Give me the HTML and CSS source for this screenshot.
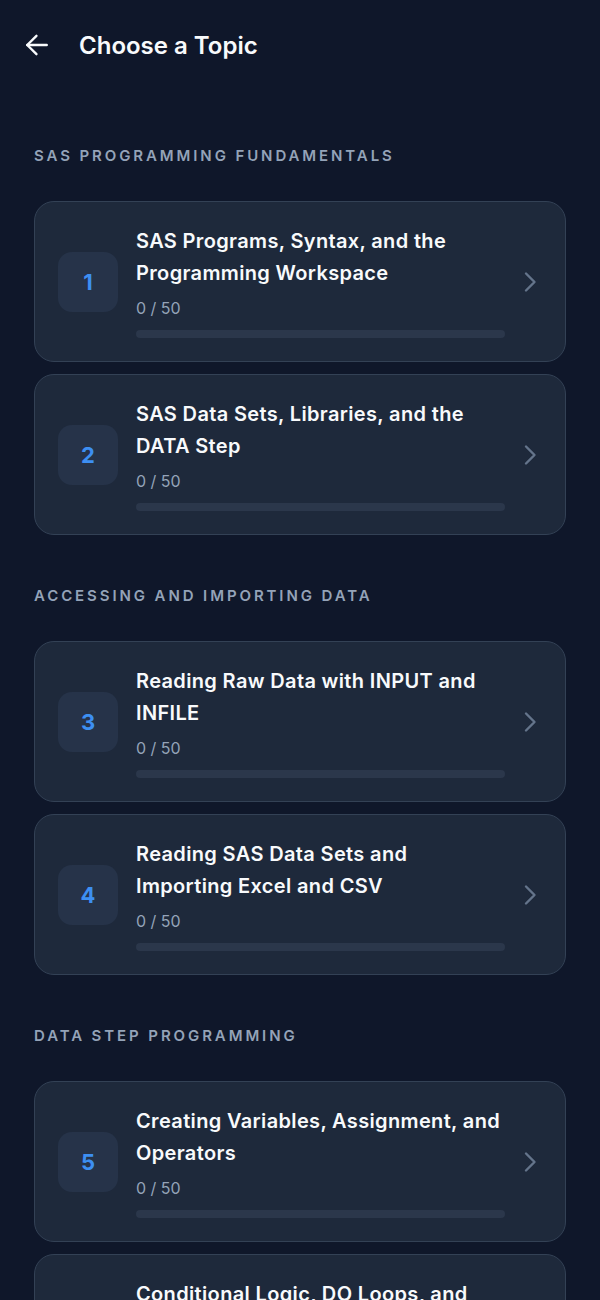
FILE: index.html
```html
<!DOCTYPE html>
<html lang="en">
<head>
  <meta charset="UTF-8">
  <meta name="viewport" content="width=device-width, initial-scale=1.0">
  <title>Choose a Topic</title>
  <link rel="stylesheet" href="styles.css">
</head>
<body>
  <header class="top-bar">
    <button class="back-btn" aria-label="Back">
      <svg width="26" height="26" viewBox="0 0 24 24" fill="none" stroke="currentColor" stroke-width="2.2" stroke-linecap="round" stroke-linejoin="round">
        <path d="M21 12H3"/>
        <path d="M11.5 3.5L3 12l8.5 8.5"/>
      </svg>
    </button>
    <h1>Choose a Topic</h1>
  </header>

  <main class="topic-list">
    <section class="topic-section">
      <h2 class="section-title">SAS Programming Fundamentals</h2>

      <a class="topic-card" href="#">
        <div class="topic-num">1</div>
        <div class="topic-body">
          <div class="topic-name">SAS Programs, Syntax, and the Programming Workspace</div>
          <div class="topic-count">0 / 50</div>
          <div class="progress"><div class="progress-fill" style="width: 0%"></div></div>
        </div>
        <svg class="chevron" width="14" height="22" viewBox="0 0 14 22" fill="none" stroke="currentColor" stroke-width="2.4" stroke-linecap="round" stroke-linejoin="round"><path d="M3 2.5l8.5 8.5L3 19.5"/></svg>
      </a>

      <a class="topic-card" href="#">
        <div class="topic-num">2</div>
        <div class="topic-body">
          <div class="topic-name">SAS Data Sets, Libraries, and the DATA Step</div>
          <div class="topic-count">0 / 50</div>
          <div class="progress"><div class="progress-fill" style="width: 0%"></div></div>
        </div>
        <svg class="chevron" width="14" height="22" viewBox="0 0 14 22" fill="none" stroke="currentColor" stroke-width="2.4" stroke-linecap="round" stroke-linejoin="round"><path d="M3 2.5l8.5 8.5L3 19.5"/></svg>
      </a>
    </section>

    <section class="topic-section">
      <h2 class="section-title">Accessing and Importing Data</h2>

      <a class="topic-card" href="#">
        <div class="topic-num">3</div>
        <div class="topic-body">
          <div class="topic-name">Reading Raw Data with INPUT and INFILE</div>
          <div class="topic-count">0 / 50</div>
          <div class="progress"><div class="progress-fill" style="width: 0%"></div></div>
        </div>
        <svg class="chevron" width="14" height="22" viewBox="0 0 14 22" fill="none" stroke="currentColor" stroke-width="2.4" stroke-linecap="round" stroke-linejoin="round"><path d="M3 2.5l8.5 8.5L3 19.5"/></svg>
      </a>

      <a class="topic-card" href="#">
        <div class="topic-num">4</div>
        <div class="topic-body">
          <div class="topic-name">Reading SAS Data Sets and Importing Excel and CSV</div>
          <div class="topic-count">0 / 50</div>
          <div class="progress"><div class="progress-fill" style="width: 0%"></div></div>
        </div>
        <svg class="chevron" width="14" height="22" viewBox="0 0 14 22" fill="none" stroke="currentColor" stroke-width="2.4" stroke-linecap="round" stroke-linejoin="round"><path d="M3 2.5l8.5 8.5L3 19.5"/></svg>
      </a>
    </section>

    <section class="topic-section">
      <h2 class="section-title">DATA Step Programming</h2>

      <a class="topic-card" href="#">
        <div class="topic-num">5</div>
        <div class="topic-body">
          <div class="topic-name">Creating Variables, Assignment, and Operators</div>
          <div class="topic-count">0 / 50</div>
          <div class="progress"><div class="progress-fill" style="width: 0%"></div></div>
        </div>
        <svg class="chevron" width="14" height="22" viewBox="0 0 14 22" fill="none" stroke="currentColor" stroke-width="2.4" stroke-linecap="round" stroke-linejoin="round"><path d="M3 2.5l8.5 8.5L3 19.5"/></svg>
      </a>

      <a class="topic-card" href="#">
        <div class="topic-num">6</div>
        <div class="topic-body">
          <div class="topic-name">Conditional Logic, DO Loops, and Arrays</div>
          <div class="topic-count">0 / 50</div>
          <div class="progress"><div class="progress-fill" style="width: 0%"></div></div>
        </div>
        <svg class="chevron" width="14" height="22" viewBox="0 0 14 22" fill="none" stroke="currentColor" stroke-width="2.4" stroke-linecap="round" stroke-linejoin="round"><path d="M3 2.5l8.5 8.5L3 19.5"/></svg>
      </a>
    </section>
  </main>
</body>
</html>
```

FILE: styles.css
```css
body {
  font-family: Inter, "Noto Sans", sans-serif;
  margin: 0;
  padding: 0;
  background-color: #0f172a;
  color: #f8fafc;
}
.top-bar {
  display: flex;
  align-items: center;
  height: 90px;
  padding: 0 24px;
  gap: 29px;
}
.back-btn {
  display: flex;
  align-items: center;
  justify-content: center;
  width: 26px;
  height: 26px;
  padding: 0;
  border: none;
  background: none;
  color: #f8fafc;
  cursor: pointer;
}
h1 {
  margin: 0;
  font-size: 24px;
  font-weight: 600;
  letter-spacing: 0;
}
.topic-list {
  padding: 56px 34px 40px;
}
.topic-section + .topic-section {
  margin-top: 51px;
}
.section-title {
  margin: 0 0 35px;
  font-size: 15px;
  line-height: 20px;
  font-weight: 600;
  text-transform: uppercase;
  letter-spacing: 2.9px;
  color: #94a3b8;
}
.topic-card {
  display: flex;
  align-items: center;
  gap: 18px;
  padding: 23px 28px 23px 23px;
  margin-bottom: 12px;
  background-color: #1e293b;
  border: 1px solid #334155;
  border-radius: 20px;
  text-decoration: none;
  color: inherit;
}
.topic-num {
  flex: none;
  display: flex;
  align-items: center;
  justify-content: center;
  width: 60px;
  height: 60px;
  border-radius: 14px;
  background-color: #263349;
  color: #3d8ff2;
  font-size: 22px;
  font-weight: 700;
}
.topic-body {
  flex: 1;
  min-width: 0;
}
.topic-name {
  font-size: 20px;
  line-height: 32px;
  font-weight: 600;
  letter-spacing: 0.35px;
  color: #f8fafc;
}
.topic-count {
  margin-top: 7px;
  font-size: 16px;
  line-height: 24px;
  color: #94a3b8;
}
.progress {
  margin-top: 10px;
  height: 8px;
  border-radius: 4px;
  background-color: #2b374b;
  overflow: hidden;
}
.progress-fill {
  height: 100%;
  background-color: #3b82f6;
}
.chevron {
  flex: none;
  color: #64748b;
}
```
